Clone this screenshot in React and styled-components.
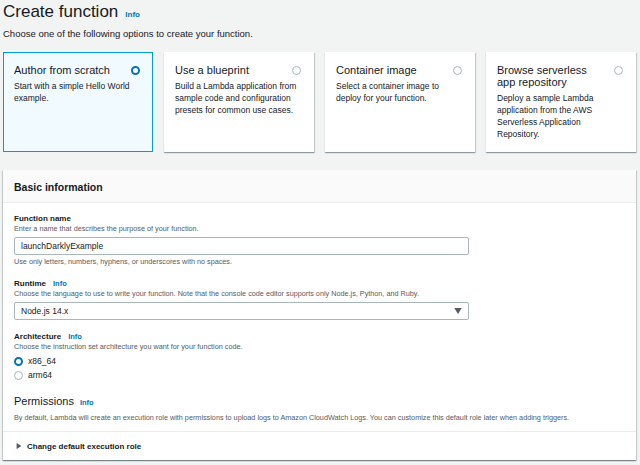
import React from "react";
import styled, { createGlobalStyle } from "styled-components";

const Global = createGlobalStyle`
  html, body { margin: 0; padding: 0; background: #f2f3f3; }
  body { font-family: "Liberation Sans", Arial, sans-serif; color: #16191f; width: 640px; height: 465px; overflow: hidden; }
  * { box-sizing: border-box; }
`;

const Page = styled.div`
  padding: 0 4px 0 3px;
  display: flex;
  flex-direction: column;
`;

const TitleRow = styled.div`
  display: flex;
  align-items: baseline;
  gap: 7px;
  height: 24px;
  padding-top: 1px;
`;

const Title = styled.h1`
  margin: 0;
  font-size: 17px;
  font-weight: 400;
  line-height: 22px;
  color: #16191f;
`;

const Info = styled.span`
  color: #0073bb;
  font-weight: 700;
  font-size: ${(p) => p.$size || 8}px;
  margin-left: ${(p) => p.$gap || 0}px;
`;

const Subtitle = styled.p`
  margin: 4px 0 0;
  font-size: 9.5px;
  line-height: 12px;
`;

const Cards = styled.div`
  display: grid;
  grid-template-columns: repeat(4, 150px);
  gap: 11px;
  margin-top: 12px;
`;

const Card = styled.div`
  height: 100px;
  background: ${(p) => (p.$selected ? "#f1faff" : "#ffffff")};
  border: 1px solid ${(p) => (p.$selected ? "#00a1c9" : "#ffffff")};
  box-shadow: ${(p) =>
    p.$selected ? "none" : "0 1px 1px 0 rgba(0,28,36,0.3), 1px 1px 1px 0 rgba(0,28,36,0.15)"};
  padding: 10px 12px 0 10px;
  display: flex;
  flex-direction: column;
`;

const CardHead = styled.div`
  display: flex;
  justify-content: space-between;
  align-items: flex-start;
  gap: 8px;
`;

const CardTitle = styled.div`
  font-size: 11px;
  line-height: 12px;
  padding-top: 1px;
`;

const CardDesc = styled.div`
  font-size: 8.5px;
  line-height: 12px;
  margin-top: 4px;
`;

const Radio = styled.span`
  flex: none;
  width: 9px;
  height: 9px;
  border-radius: 50%;
  margin-top: 3px;
  border: ${(p) => (p.$checked ? "2.5px solid #0073bb" : "1px solid #aab7b8")};
  background: #fff;
`;

const Panel = styled.section`
  margin-top: 18px;
  background: #fff;
  box-shadow: 0 1px 1px 0 rgba(0,28,36,0.3), 1px 1px 1px 0 rgba(0,28,36,0.15), -1px 1px 1px 0 rgba(0,28,36,0.15);
  display: flex;
  flex-direction: column;
`;

const PanelHeader = styled.div`
  background: #fafafa;
  border-bottom: 1px solid #eaeded;
  height: 33px;
  padding: 1px 11px 0;
  display: flex;
  align-items: center;
`;

const PanelTitle = styled.h2`
  margin: 0;
  font-size: 10.5px;
  font-weight: 700;
`;

const Body = styled.div`
  padding: 11px 12px 0 11px;
  display: flex;
  flex-direction: column;
`;

const Field = styled.div`
  display: flex;
  flex-direction: column;
  margin-bottom: 12px;
`;

const Label = styled.div`
  font-size: 8px;
  font-weight: 700;
  line-height: 10px;
  display: flex;
  align-items: baseline;
`;

const Hint = styled.div`
  font-size: 7.25px;
  color: #545b64;
  line-height: 10px;
  margin-top: ${(p) => p.$mt || 0}px;
`;

const Input = styled.div`
  margin-top: 3px;
  width: 455px;
  height: 18px;
  border: 1px solid #aab7b8;
  border-radius: 2px;
  padding: 0 6px;
  font-size: 8.5px;
  display: flex;
  align-items: center;
  justify-content: space-between;
  background: #fff;
`;

const Constraint = styled.div`
  font-size: 7.25px;
  color: #545b64;
  line-height: 10px;
  margin-top: 2px;
`;

const Options = styled.div`
  display: flex;
  flex-direction: column;
  margin-top: 2px;
`;

const Option = styled.label`
  display: flex;
  align-items: center;
  gap: 5px;
  font-size: 8.5px;
  height: 14px;
`;

const OptRadio = styled(Radio)`
  margin-top: 0;
`;

const SectionTitle = styled.div`
  font-size: 11px;
  line-height: 16px;
  display: flex;
  align-items: baseline;
  margin-top: -1px;
`;

const Divider = styled.div`
  height: 1px;
  background: #eaeded;
  margin-top: 8px;
`;

const Expander = styled.div`
  display: flex;
  align-items: center;
  gap: 5px;
  height: 28px;
  padding-left: 13px;
  font-size: 8px;
  font-weight: 700;
`;

const Caret = styled.svg`
  width: ${(p) => p.$w || 6}px;
  height: 6px;
  fill: #545b64;
`;

const cards = [
  { t: "Author from scratch", d: "Start with a simple Hello World example.", sel: true },
  { t: "Use a blueprint", d: "Build a Lambda application from sample code and configuration presets for common use cases." },
  { t: "Container image", d: "Select a container image to deploy for your function." },
  { t: "Browse serverless app repository", d: "Deploy a sample Lambda application from the AWS Serverless Application Repository." },
];

export default function App() {
  return (
    <>
      <Global />
      <Page>
        <TitleRow>
          <Title>Create function</Title>
          <Info $size={8}>Info</Info>
        </TitleRow>
        <Subtitle>Choose one of the following options to create your function.</Subtitle>
        <Cards>
          {cards.map((c) => (
            <Card key={c.t} $selected={c.sel}>
              <CardHead>
                <CardTitle>{c.t}</CardTitle>
                <Radio $checked={c.sel} />
              </CardHead>
              <CardDesc>{c.d}</CardDesc>
            </Card>
          ))}
        </Cards>
        <Panel>
          <PanelHeader>
            <PanelTitle>Basic information</PanelTitle>
          </PanelHeader>
          <Body>
            <Field>
              <Label>Function name</Label>
              <Hint>Enter a name that describes the purpose of your function.</Hint>
              <Input>launchDarklyExample</Input>
              <Constraint>Use only letters, numbers, hyphens, or underscores with no spaces.</Constraint>
            </Field>
            <Field>
              <Label>
                Runtime<Info $size={7.5} $gap={7}>Info</Info>
              </Label>
              <Hint>
                Choose the language to use to write your function. Note that the console code editor supports only Node.js, Python, and Ruby.
              </Hint>
              <Input>
                Node.js 14.x
                <Caret viewBox="0 0 10 8" $w={8}>
                  <path d="M0 0h10L5 8z" />
                </Caret>
              </Input>
            </Field>
            <Field>
              <Label>
                Architecture<Info $size={7.5} $gap={7}>Info</Info>
              </Label>
              <Hint>Choose the instruction set architecture you want for your function code.</Hint>
              <Options>
                <Option>
                  <OptRadio $checked />
                  x86_64
                </Option>
                <Option>
                  <OptRadio />
                  arm64
                </Option>
              </Options>
            </Field>
            <SectionTitle>
              Permissions<Info $size={7.5} $gap={6}>Info</Info>
            </SectionTitle>
            <Hint $mt={2}>
              By default, Lambda will create an execution role with permissions to upload logs to Amazon CloudWatch Logs. You can customize this default role later when adding triggers.
            </Hint>
          </Body>
          <Divider />
          <Expander>
            <Caret viewBox="0 0 8 10">
              <path d="M0 0l8 5-8 5z" />
            </Caret>
            Change default execution role
          </Expander>
        </Panel>
      </Page>
    </>
  );
}
